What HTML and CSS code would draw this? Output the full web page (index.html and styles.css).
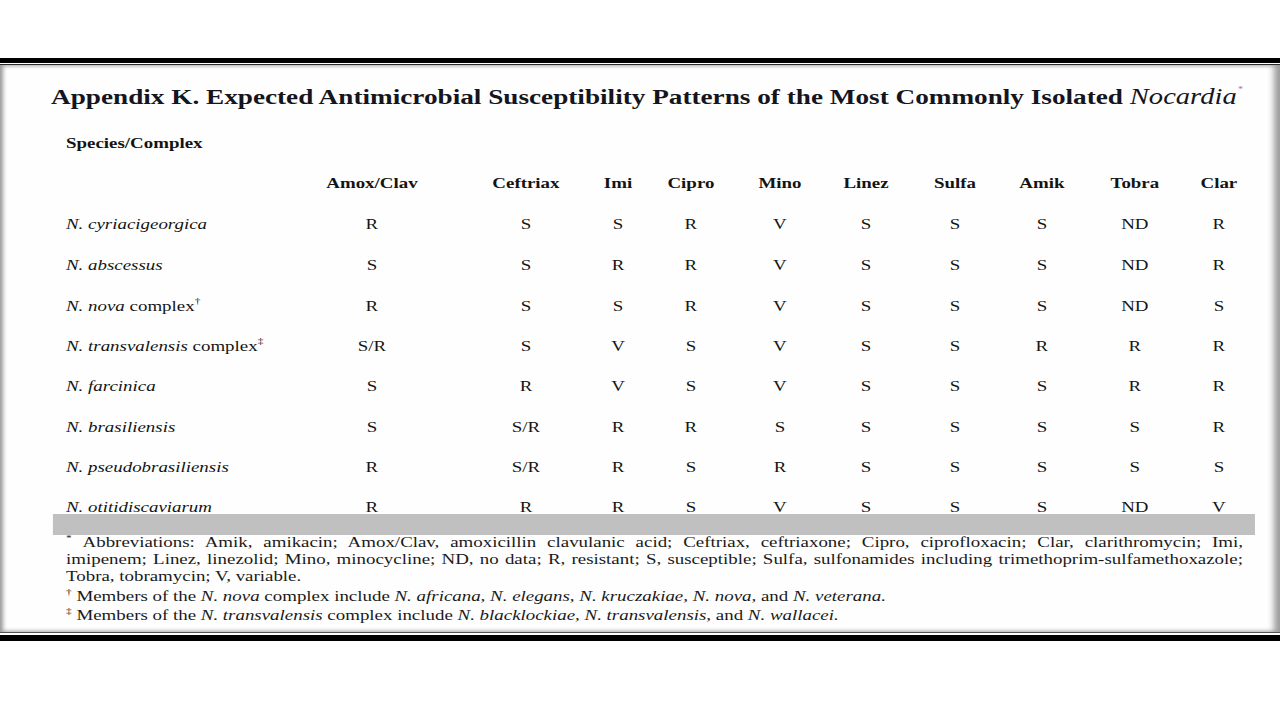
FILE: index.html
```html
<!DOCTYPE html>
<html>
<head>
<meta charset="utf-8">
<link rel="stylesheet" href="styles.css">
</head>
<body>
<div class="frame">
  <div class="sheet">
    <div class="content">
      <h1 class="title">Appendix K. Expected Antimicrobial Susceptibility Patterns of the Most Commonly Isolated <i class="genus">Nocardia</i><sup class="star">*</sup></h1>
      <div class="species-label">Species/Complex</div>
      <div class="table">
        <div class="cell"></div>
        <div class="cell head">Amox/Clav</div>
        <div class="cell head">Ceftriax</div>
        <div class="cell head">Imi</div>
        <div class="cell head">Cipro</div>
        <div class="cell head">Mino</div>
        <div class="cell head">Linez</div>
        <div class="cell head">Sulfa</div>
        <div class="cell head">Amik</div>
        <div class="cell head">Tobra</div>
        <div class="cell head">Clar</div>

        <div class="cell name"><span><i>N. cyriacigeorgica</i></span></div>
        <div class="cell">R</div><div class="cell">S</div><div class="cell">S</div><div class="cell">R</div><div class="cell">V</div><div class="cell">S</div><div class="cell">S</div><div class="cell">S</div><div class="cell">ND</div><div class="cell">R</div>

        <div class="cell name"><span><i>N. abscessus</i></span></div>
        <div class="cell">S</div><div class="cell">S</div><div class="cell">R</div><div class="cell">R</div><div class="cell">V</div><div class="cell">S</div><div class="cell">S</div><div class="cell">S</div><div class="cell">ND</div><div class="cell">R</div>

        <div class="cell name"><span><i>N. nova</i> complex<sup class="mark">†</sup></span></div>
        <div class="cell">R</div><div class="cell">S</div><div class="cell">S</div><div class="cell">R</div><div class="cell">V</div><div class="cell">S</div><div class="cell">S</div><div class="cell">S</div><div class="cell">ND</div><div class="cell">S</div>

        <div class="cell name"><span><i>N. transvalensis</i> complex<sup class="mark">‡</sup></span></div>
        <div class="cell">S/R</div><div class="cell">S</div><div class="cell">V</div><div class="cell">S</div><div class="cell">V</div><div class="cell">S</div><div class="cell">S</div><div class="cell">R</div><div class="cell">R</div><div class="cell">R</div>

        <div class="cell name"><span><i>N. farcinica</i></span></div>
        <div class="cell">S</div><div class="cell">R</div><div class="cell">V</div><div class="cell">S</div><div class="cell">V</div><div class="cell">S</div><div class="cell">S</div><div class="cell">S</div><div class="cell">R</div><div class="cell">R</div>

        <div class="cell name"><span><i>N. brasiliensis</i></span></div>
        <div class="cell">S</div><div class="cell">S/R</div><div class="cell">R</div><div class="cell">R</div><div class="cell">S</div><div class="cell">S</div><div class="cell">S</div><div class="cell">S</div><div class="cell">S</div><div class="cell">R</div>

        <div class="cell name"><span><i>N. pseudobrasiliensis</i></span></div>
        <div class="cell">R</div><div class="cell">S/R</div><div class="cell">R</div><div class="cell">S</div><div class="cell">R</div><div class="cell">S</div><div class="cell">S</div><div class="cell">S</div><div class="cell">S</div><div class="cell">S</div>

        <div class="cell name"><span><i>N. otitidiscaviarum</i></span></div>
        <div class="cell">R</div><div class="cell">R</div><div class="cell">R</div><div class="cell">S</div><div class="cell">V</div><div class="cell">S</div><div class="cell">S</div><div class="cell">S</div><div class="cell">ND</div><div class="cell">V</div>
      </div>
      <div class="shade"></div>
      <div class="notes">
        <div class="abbr">
          <span class="jline"><sup class="fstar">*</sup>&nbsp;Abbreviations: Amik, amikacin; Amox/Clav, amoxicillin clavulanic acid; Ceftriax, ceftriaxone; Cipro, ciprofloxacin; Clar, clarithromycin; Imi,</span>
          <span class="jline">imipenem; Linez, linezolid; Mino, minocycline; ND, no data; R, resistant; S, susceptible; Sulfa, sulfonamides including trimethoprim-sulfamethoxazole;</span>
          <span class="lline">Tobra, tobramycin; V, variable.</span>
        </div>
        <p class="dnote first"><sup class="fmark">†</sup> Members of the <i>N. nova</i> complex include <i>N. africana, N. elegans, N. kruczakiae, N. nova,</i> and <i>N. veterana.</i></p>
        <p class="dnote"><sup class="fmark">‡</sup> Members of the <i>N. transvalensis</i> complex include <i>N. blacklockiae, N. transvalensis,</i> and <i>N. wallacei.</i></p>
      </div>
    </div>
  </div>
</div>
</body>
</html>
```

FILE: styles.css
```css
html, body {
  margin: 0;
  padding: 0;
  background: #ffffff;
}

body {
  font-family: "Liberation Serif", "Times New Roman", serif;
  color: #141414;
  overflow: hidden;
}

.frame {
  margin-top: 58px;
  border-top: 5px solid #000;
  border-bottom: 6px solid #000;
  padding: 1px 0 2px;
  background: #fff;
}

.sheet {
  height: 567px;
  border-top: 1px solid #2a2a2a;
  border-bottom: 1px solid #555;
  background: #fefefe;
  box-shadow: inset 5px 0 4px -2px #9a9a9a, inset -9px 0 6px -3px #9c9c9c, inset 0 3px 4px -2px #bbb, inset 0 -3px 4px -2px #bbb;
  overflow: hidden;
}

.content {
  width: 1016px;
  transform: scaleX(1.26);
  transform-origin: 0 0;
}

.title {
  margin: 0;
  padding: 18px 0 0 40.5px;
  font-size: 21.6px;
  line-height: 28px;
  font-weight: bold;
  white-space: nowrap;
  color: #151520;
}

.genus {
  font-weight: normal;
  font-size: 1.05em;
}

.star {
  font-size: 8px;
  font-weight: normal;
  color: #888;
  vertical-align: 12px;
  line-height: 0;
  margin-left: 1px;
}

.species-label {
  margin-top: 22px;
  padding-left: 52.4px;
  font-weight: bold;
  font-size: 15px;
  line-height: 20px;
}

.table {
  margin-top: 10.8px;
  padding-left: 52.4px;
  display: grid;
  grid-template-columns: 181.7px 122.2px 122.3px 23.8px 92px 49.3px 87.3px 53.9px 84.1px 63.5px 69.9px;
  grid-template-rows: 40.4px 41.4px repeat(6, 40.4px) 38.4px;
  font-size: 15px;
}

.cell {
  display: flex;
  align-items: center;
  justify-content: center;
  white-space: nowrap;
}

.head {
  font-weight: bold;
}

.name {
  justify-content: flex-start;
}

.mark {
  font-size: 9px;
  line-height: 0;
  vertical-align: 7px;
}

.shade {
  margin: -12.4px 0 0 42.1px;
  width: 953.9px;
  height: 20.6px;
  background: #c0c0c0;
}

.notes {
  padding-left: 52.4px;
  width: 934.1px;
  font-size: 15px;
  color: #1a1a1a;
}

.abbr {
  margin-top: -1px;
  line-height: 17px;
}

.jline {
  display: block;
  text-align: justify;
  text-align-last: justify;
}

.lline {
  display: block;
}

.fstar {
  font-size: 9px;
  line-height: 0;
  vertical-align: 6px;
}

.dnote {
  margin: 0;
  line-height: 19px;
}

.dnote.first {
  padding-top: 2px;
}

.fmark {
  font-size: 9px;
  line-height: 0;
  vertical-align: 6px;
}
```
